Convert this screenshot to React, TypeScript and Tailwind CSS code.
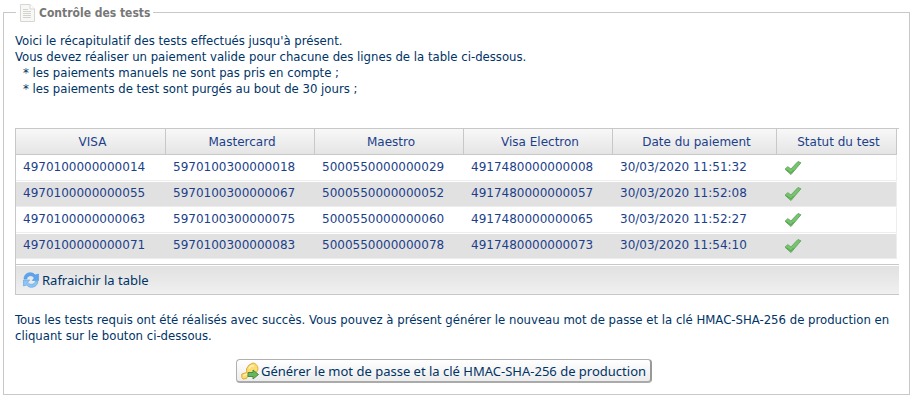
const columns = [
    { label: 'VISA', width: 'w-[150px]' },
    { label: 'Mastercard', width: 'w-[149px]' },
    { label: 'Maestro', width: 'w-[149px]' },
    { label: 'Visa Electron', width: 'w-[149px]' },
    { label: 'Date du paiement', width: 'w-[164px]' },
    { label: 'Statut du test', width: 'w-[120px]' },
];

const rows = [
    ['4970100000000014', '5970100300000018', '5000550000000029', '4917480000000008', '30/03/2020 11:51:32'],
    ['4970100000000055', '5970100300000067', '5000550000000052', '4917480000000057', '30/03/2020 11:52:08'],
    ['4970100000000063', '5970100300000075', '5000550000000060', '4917480000000065', '30/03/2020 11:52:27'],
    ['4970100000000071', '5970100300000083', '5000550000000078', '4917480000000073', '30/03/2020 11:54:10'],
];

function PageIcon() {
    return (
        <svg width="16" height="18" viewBox="0 0 16 18" aria-hidden="true">
            <path d="M1.500.5h9.500l4.500 4.500v12.500h-14z" fill="#f8f8f6" stroke="#d6d6d2" />
            <path d="M11 .5V5h4.500" fill="#fff" stroke="#d6d6d2" />
            <path d="M4 5.500h5M4 7.500h8M4 9.500h8M4 11.500h8M4 13.500h8" stroke="#d2d2cf" />
        </svg>
    );
}

function CheckIcon() {
    return (
        <svg width="18" height="16" viewBox="0 0 18 16" role="img" aria-label="Validé">
            <path d="M1 9.200 3.800 6.700l3.100 2.300L14 1.500l2.900 1.300L7 14.500z" fill="#76c46c" stroke="#6aa866" strokeLinejoin="round" />
            <path d="M2.500 9.800 6.900 13l2.600-3" fill="none" stroke="#55a44f" />
        </svg>
    );
}

function RefreshIcon() {
    return (
        <svg width="16" height="16" viewBox="0 0 16 16" aria-hidden="true">
            <path d="M1 7C1 3.500 3.500.7 7.300.7c2 0 3.700.8 4.900 2.300L15.500 2v6.500H9.300l2-2.500C10.300 4.500 9 3.700 7.500 3.700 5.500 3.700 4 5 3.700 7z" fill="#5ba6ee" stroke="#4c94e0" strokeWidth=".6" />
            <path d="M15 9.500c-.5 3.500-3 5.800-6.500 5.800-2 0-3.700-.8-4.900-2.300L.5 14V8h6.200l-2 2.200c1 1.400 2.100 2.100 3.600 2.100 2 0 3.500-1 3.900-2.800z" fill="#8cc5f5" stroke="#5b9fe4" strokeWidth=".6" />
        </svg>
    );
}

function KeyIcon() {
    return (
        <svg width="18" height="18" viewBox="0 0 18 18" aria-hidden="true">
            <path d="M12 1c2 0 5 2.500 5 5.500s-2 4.500-4.500 4.500L8 11.500l-2.500 5-3.500.5L.8 15.500V12l5-1.500L5.500 7 8 3z" fill="#fbdc70" stroke="#e0a93a" strokeLinejoin="round" />
            <path d="M8 6.500 10 4h3M2.500 13.500l4-1.500" fill="none" stroke="#fff2b8" strokeWidth="1.300" />
            <path d="M7 10.500h5V8l5.500 4.500L12 17v-2.500H7z" fill="#68b55c" stroke="#458f3f" />
        </svg>
    );
}

export default function App() {
    return (
        <main className="bg-white px-[3px] pt-[3px] pb-1 font-['DejaVu_Sans_Condensed','DejaVu_Sans',sans-serif] text-[13px] leading-4 text-[#003366]">
            <fieldset className="border border-[#c8c8c8] pr-[10px] pb-[11px] pl-[11px]">
                <legend className="ml-px px-[3px] text-xs font-bold text-[#777]">
                    <span className="flex h-[19px] items-center gap-1">
                        <PageIcon />
                        Contrôle des tests
                    </span>
                </legend>

                <div className="pt-[11px]">
                    <p>Voici le récapitulatif des tests effectués jusqu'à présent.</p>
                    <p>Vous devez réaliser un paiement valide pour chacune des lignes de la table ci-dessous.</p>
                    <ul className="pl-2">
                        <li>* les paiements manuels ne sont pas pris en compte ;</li>
                        <li>* les paiements de test sont purgés au bout de 30 jours ;</li>
                    </ul>
                </div>

                <div className="mt-[31px] border-y border-l border-[#c8c8c8]">
                    <div className="pr-0.5">
                        <table className="w-full table-fixed border-separate border-spacing-0 bg-white font-['DejaVu_Sans',sans-serif] text-xs text-[#1c3f8b]">
                            <thead>
                                <tr className="bg-linear-to-b from-[#f8f8f8] to-[#e4e4e4]">
                                    {columns.map((column) => (
                                        <th key={column.label} scope="col" className={`h-[26px] border-r border-b border-[#c8c8c8] p-0 pl-1 font-normal ${column.width}`}>
                                            {column.label}
                                        </th>
                                    ))}
                                </tr>
                            </thead>
                            <tbody>
                                {rows.map((row) => (
                                    <tr key={row[0]} className="even:bg-[#e1e1e1]">
                                        {row.map((value) => (
                                            <td key={value} className="h-[26px] border-y border-t-white border-b-[#ededed] p-0 pb-[3px] pl-[7px]">{value}</td>
                                        ))}
                                        <td className="h-[26px] border-y border-r border-t-white border-r-[#ededed] border-b-[#ededed] p-0 pl-[7px]">
                                            <CheckIcon />
                                        </td>
                                    </tr>
                                ))}
                            </tbody>
                        </table>
                    </div>
                    <div className="mt-[5px] border-t border-[#c8c8c8]">
                        <div className="border-t border-white bg-linear-to-b from-[#e1e1e1] to-[#f0f0f0]">
                            <button type="button" className="flex h-7 items-center gap-[3px] px-[7px] font-['Noto_Sans',sans-serif]">
                                <RefreshIcon />
                                Rafraichir la table
                            </button>
                        </div>
                    </div>
                </div>

                <p className="mt-[17px]">
                    Tous les tests requis ont été réalisés avec succès. Vous pouvez à présent générer le nouveau mot de passe et la clé HMAC-SHA-256 de production en cliquant sur le bouton ci-dessous.
                </p>

                <div className="mt-[15px] flex justify-center pr-[26px]">
                    <button type="button" className="flex h-6 items-center gap-0.5 rounded-sm border border-r-2 border-b-2 border-[#b0b0b0] border-r-[#999] border-b-[#aaa] bg-linear-to-b from-white to-[#ececec] px-1 font-['Noto_Sans',sans-serif]">
                        <KeyIcon />
                        Générer le mot de passe et la clé HMAC-SHA-256 de production
                    </button>
                </div>
            </fieldset>
        </main>
    );
}
